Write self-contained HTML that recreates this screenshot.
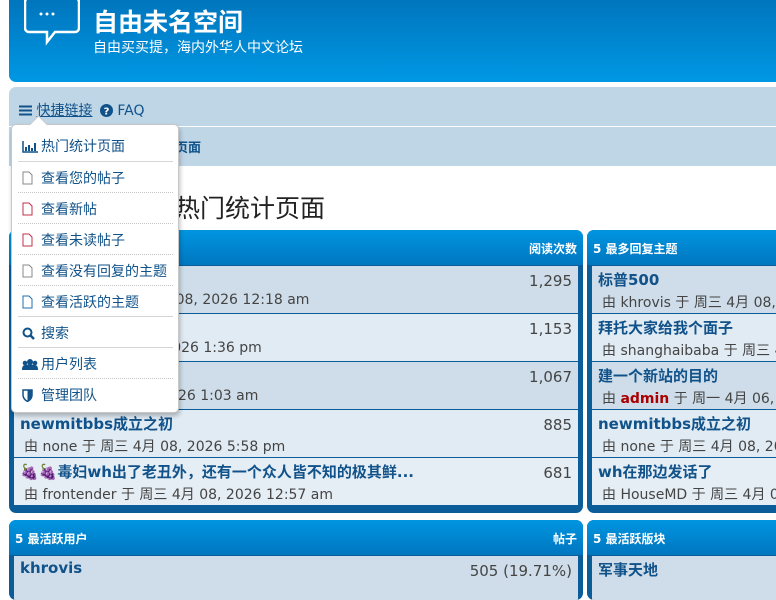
<!DOCTYPE html>
<html><head><meta charset="utf-8"><style>
*{margin:0;padding:0;box-sizing:border-box}
body{width:776px;height:583px;overflow:hidden;background:#fff;font-family:"DejaVu Sans","Noto Sans CJK SC",sans-serif;position:relative;color:#333}
.hdr{position:absolute;left:9px;top:-10px;width:790px;height:92px;border-radius:7px;background:linear-gradient(#0071b8,#0098e4)}
.t1{position:absolute;left:93px;top:3px;color:#fff;font-size:25px;font-weight:bold}
.t2{position:absolute;left:93px;top:37px;color:#fff;font-size:14px}
.nav{position:absolute;left:9px;top:87px;width:790px;height:79px;background:#bfd6e6;border-radius:7px 0 0 0}
.nav .l{position:absolute;left:0;right:0;top:39px;height:1px;background:#fff}
.ql{position:absolute;left:19px;top:100px;font-size:14px;color:#105289;white-space:nowrap}
.crumb{position:absolute;left:175px;top:137px;font-size:13px;font-weight:bold;color:#105289}
h2{position:absolute;left:175px;top:189px;font-size:25px;font-weight:normal;color:#222}
.panel{position:absolute;background:#0a5d99;border-radius:7px;overflow:hidden}
.ph{height:35px;background:linear-gradient(#0095e0,#0076c0);color:#fff;font-size:12px;font-weight:bold;padding:10px 6px 0;position:relative}
.ph span{position:absolute;right:6px;top:10px}
.row{position:relative;height:48px;margin:0 5px 0 5px;border-top:1px solid #0a5d99;padding:3px 6px}
.row.a{background:#cedde9}.row.b{background:#e1ebf3}
.tt{font-size:15px;font-weight:bold;color:#105289;white-space:nowrap}
.by{font-size:14px;color:#444;margin-top:2px;padding-left:4px;white-space:nowrap}
.by b{color:#aa0000}
.num{position:absolute;right:6px;top:6px;font-size:15px;color:#444}
.menu{position:absolute;left:11px;top:124px;width:168px;height:289px;background:#fff;border:1px solid #c7c7c7;border-radius:5px;box-shadow:1px 3px 5px rgba(0,0,0,.25)}
.menu:before{content:"";position:absolute;left:20px;top:-7px;width:12px;height:12px;background:#fff;border-left:1px solid #c7c7c7;border-top:1px solid #c7c7c7;transform:rotate(45deg)}
.mi{position:absolute;left:6px;width:155px;height:31px;font-size:14px;color:#105289;padding:6px 0 0 4px;white-space:nowrap}
.mi.s{border-top:1px solid #d5d5d5}.mi.d{border-top:1px dotted #c5c5c5}
.ic{display:inline-block;width:19px;vertical-align:-2px}
</style></head><body>
<div class="hdr"></div>
<svg style="position:absolute;left:24px;top:0" width="56" height="46" viewBox="0 0 56 46"><path d="M4 -4 H50 a4 4 0 0 1 4 4 V26 a4 4 0 0 1 -4 4 H30 L22 40 V30 H4 a4 4 0 0 1 -4 -4 V0 a4 4 0 0 1 4 -4Z" fill="none" stroke="#fff" stroke-width="2.5" transform="translate(1,2)"/><circle cx="17" cy="14" r="1.5" fill="#fff"/><circle cx="23" cy="14" r="1.5" fill="#fff"/><circle cx="29" cy="14" r="1.5" fill="#fff"/></svg>
<div class="t1">自由未名空间</div>
<div class="t2">自由买买提，海内外华人中文论坛</div>
<div class="nav"><div class="l"></div></div>
<div class="ql"><svg width="13" height="11" style="vertical-align:-1px"><path d="M0 1.5H13M0 5.5H13M0 9.5H13" stroke="#105289" stroke-width="2"/></svg> <u>快捷链接</u> <svg width="13" height="13" style="vertical-align:-2px;margin-left:3px"><circle cx="6.5" cy="6.5" r="6.5" fill="#105289"/><text x="6.5" y="10.5" font-size="10" font-weight="bold" fill="#fff" text-anchor="middle" font-family="DejaVu Sans">?</text></svg> FAQ</div>
<div class="crumb">页面</div>
<h2>热门统计页面</h2>

<div class="panel" style="left:9px;top:230px;width:574px;height:283px">
<div class="ph"><span>阅读次数</span></div>
<div class="row a"><div class="tt">&nbsp;</div><div class="by">由 khrovis 于 周三 4月 08, 2026 12:18 am</div><div class="num">1,295</div></div>
<div class="row b"><div class="tt">&nbsp;</div><div class="by">由 admin 于 4月 06, 2026 1:36 pm</div><div class="num">1,153</div></div>
<div class="row a"><div class="tt">&nbsp;</div><div class="by">由 x 于 周三 4月 08, 2026 1:03 am</div><div class="num">1,067</div></div>
<div class="row b"><div class="tt">newmitbbs成立之初</div><div class="by">由 none 于 周三 4月 08, 2026 5:58 pm</div><div class="num">885</div></div>
<div class="row b" style="background:#e6eef5"><div class="tt">🍇🍇毒妇wh出了老丑外，还有一个众人皆不知的极其鲜...</div><div class="by">由 frontender 于 周三 4月 08, 2026 12:57 am</div><div class="num">681</div></div>
</div>
<div class="panel" style="left:587px;top:230px;width:200px;height:283px">
<div class="ph">5 最多回复主题</div>
<div class="row a"><div class="tt">标普500</div><div class="by">由 khrovis 于 周三 4月 08, 2026</div></div>
<div class="row b"><div class="tt">拜托大家给我个面子</div><div class="by">由 shanghaibaba 于 周三 4月</div></div>
<div class="row a"><div class="tt">建一个新站的目的</div><div class="by">由 <b>admin</b> 于 周一 4月 06, 2026</div></div>
<div class="row b"><div class="tt">newmitbbs成立之初</div><div class="by">由 none 于 周三 4月 08, 2026</div></div>
<div class="row b" style="background:#e6eef5"><div class="tt">wh在那边发话了</div><div class="by">由 HouseMD 于 周三 4月 08</div></div>
</div>
<div class="panel" style="left:9px;top:520px;width:574px;height:80px">
<div class="ph">5 最活跃用户<span>帖子</span></div>
<div class="row a"><div class="tt">khrovis</div><div class="num">505 (19.71%)</div></div>
</div>
<div class="panel" style="left:587px;top:520px;width:200px;height:80px">
<div class="ph">5 最活跃版块</div>
<div class="row a"><div class="tt">军事天地</div></div>
</div>

<div class="menu">
<div class="mi" style="top:5px"><span class="ic"><svg width="16" height="13"><path d="M1 1V12H16" fill="none" stroke="#105289" stroke-width="1.5"/><path d="M4 7V11M7 5V11M10 8V11M13 3V11" stroke="#105289" stroke-width="2"/></svg></span>热门统计页面</div>
<div class="mi s" style="top:36px"><span class="ic"><svg width="11" height="14"><path d="M1 1H7L10 4V13H1Z" fill="none" stroke="#888"/></svg></span>查看您的帖子</div>
<div class="mi d" style="top:67px"><span class="ic"><svg width="11" height="14"><path d="M1 1H7L10 4V13H1Z" fill="none" stroke="#c0304a"/></svg></span>查看新帖</div>
<div class="mi d" style="top:98px"><span class="ic"><svg width="11" height="14"><path d="M1 1H7L10 4V13H1Z" fill="none" stroke="#c0304a"/></svg></span>查看未读帖子</div>
<div class="mi d" style="top:129px"><span class="ic"><svg width="11" height="14"><path d="M1 1H7L10 4V13H1Z" fill="none" stroke="#888"/></svg></span>查看没有回复的主题</div>
<div class="mi d" style="top:160px"><span class="ic"><svg width="11" height="14"><path d="M1 1H7L10 4V13H1Z" fill="none" stroke="#1f6fb0"/></svg></span>查看活跃的主题</div>
<div class="mi s" style="top:191px"><span class="ic"><svg width="13" height="13"><circle cx="5.5" cy="5.5" r="4" fill="none" stroke="#105289" stroke-width="2"/><path d="M8.5 8.5L12 12" stroke="#105289" stroke-width="2.5"/></svg></span>搜索</div>
<div class="mi s" style="top:222px"><span class="ic"><svg width="16" height="13"><circle cx="8" cy="4" r="3" fill="#105289"/><circle cx="3" cy="5" r="2.3" fill="#105289"/><circle cx="13" cy="5" r="2.3" fill="#105289"/><path d="M0 12Q0 7 3 7Q8 6 13 7Q16 7 16 12Z" fill="#105289"/></svg></span>用户列表</div>
<div class="mi d" style="top:253px"><span class="ic"><svg width="11" height="13"><path d="M1 1H10V6Q10 10 5.5 12.5Q1 10 1 6Z" fill="none" stroke="#105289" stroke-width="1.5"/><path d="M5.5 1V12.5Q10 10 10 6V1Z" fill="#105289"/></svg></span>管理团队</div>
</div>
</body></html>
